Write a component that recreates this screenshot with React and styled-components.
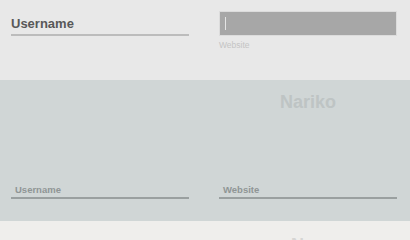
import React from 'react';
import styled, { createGlobalStyle } from 'styled-components';

const GlobalStyle = createGlobalStyle`
  html, body {
    margin: 0;
    padding: 0;
    width: 410px;
    height: 240px;
    overflow: hidden;
    font-family: "Liberation Sans", Arial, sans-serif;
  }
`;

const Section = styled.section`
  box-sizing: border-box;
  height: ${(props) => props.h}px;
  background: ${(props) => props.bg};
  padding: ${(props) => props.pad};
  display: grid;
  grid-template-columns: 178px 178px;
  column-gap: 30px;
  grid-template-rows: ${(props) => props.rows || 'auto'};
`;

const Field = styled.div`
  display: flex;
  flex-direction: column;
`;

const BigLabel = styled.div`
  box-sizing: border-box;
  height: 25px;
  padding-top: 5px;
  font-size: 13px;
  font-weight: bold;
  color: #585858;
  border-bottom: 2px solid #bcbcbc;
`;

const FilledBox = styled.div`
  box-sizing: border-box;
  height: 25px;
  background: #a7a7a7;
  border: 1px solid #dcdcdc;
  display: flex;
  align-items: center;
  padding-left: 5px;
`;

const Caret = styled.span`
  width: 1px;
  height: 13px;
  background: #e4e4e4;
`;

const SmallLabel = styled.div`
  margin-top: 4px;
  font-size: 8.5px;
  color: #c4c4c4;
`;

const Title = styled.h2`
  grid-column: 2;
  margin: 0;
  text-align: center;
  font-size: 18px;
  font-weight: bold;
  color: ${(props) => props.color};
  line-height: 18px;
`;

const LineField = styled.div`
  grid-row: 2;
  align-self: end;
  box-sizing: border-box;
  padding: 0 0 2px 4px;
  font-size: 9.5px;
  font-weight: bold;
  color: #8f9595;
  border-bottom: 2px solid #9aa0a0;
`;

export default function App() {
  return (
    <>
      <GlobalStyle />
      <Section h={80} bg="#e8e8e8" pad="11px 13px 0 11px">
        <Field>
          <BigLabel>Username</BigLabel>
        </Field>
        <Field>
          <FilledBox>
            <Caret />
          </FilledBox>
          <SmallLabel>Website</SmallLabel>
        </Field>
      </Section>
      <Section h={141} bg="#d0d6d6" pad="13px 13px 22px 11px" rows="18px 1fr">
        <Title color="#bec4c4">Nariko</Title>
        <LineField>Username</LineField>
        <LineField>Website</LineField>
      </Section>
      <Section h={19} bg="#efeeec" pad="15px 13px 0 11px">
        <Title color="#d6d5d3">Nao</Title>
      </Section>
    </>
  );
}
